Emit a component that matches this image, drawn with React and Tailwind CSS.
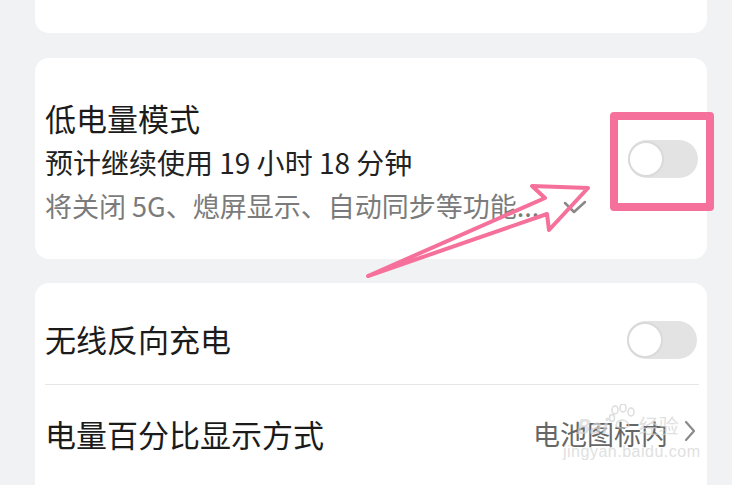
const font = { fontFamily: '"Noto Sans CJK SC", "Noto Sans", sans-serif' };

const Toggle = () => (
  <div className="relative w-[70px] h-[38px] rounded-full bg-[#e3e3e3] shrink-0">
    <div className="absolute left-0 top-[1px] w-[36px] h-[36px] rounded-full bg-white border-2 border-[#dadada]" />
  </div>
);

export default function App() {
  return (
    <div
      className="relative w-[732px] h-[485px] overflow-hidden bg-[#f1f2f4] pl-[35px] pr-[25px]"
      style={font}
    >
      {/* top card (cut off) */}
      <div className="h-[33px] bg-white rounded-b-[14px]" />

      {/* low power mode */}
      <div className="mt-[25px] h-[201px] bg-white rounded-[14px] px-[10px] flex justify-between">
        <div className="pt-[38px]">
          <div className="text-[31px] leading-[44px] text-[#1b1b1b]">低电量模式</div>
          <div className="text-[28px] leading-[44px] text-[#222]">预计继续使用 19 小时 18 分钟</div>
          <div className="flex items-center text-[27px] leading-[44px] text-[#7b7b7b]">
            <span>将关闭 5G、熄屏显示、自动同步等功能...</span>
            <svg width="24" height="14" viewBox="0 0 24 14" className="ml-[24px] mt-[2px]">
              <polyline points="2,3 11,12 22,2" fill="none" stroke="#888" strokeWidth="2.5" strokeLinecap="round" strokeLinejoin="round" />
            </svg>
          </div>
        </div>
        <div className="self-center mr-[-1px]">
          <Toggle />
        </div>
      </div>

      {/* wireless / percentage */}
      <div className="mt-[24px] h-[300px] bg-white rounded-t-[14px] px-[10px] pt-[12px]">
        <div className="h-[89px] flex items-center justify-between">
          <span className="text-[31px] text-[#1b1b1b]">无线反向充电</span>
          <Toggle />
        </div>
        <div className="h-px bg-[#e6e6e6] mr-[-2px]" />
        <div className="h-[98px] flex items-center justify-between">
          <span className="text-[31px] text-[#1b1b1b]">电量百分比显示方式</span>
          <div className="flex items-center">
            <span className="text-[27px] text-[#666]">电池图标内</span>
            <svg width="14" height="22" viewBox="0 0 14 22" className="ml-[15px] mb-[6px]">
              <polyline points="3,2 11,11 3,20" fill="none" stroke="#8a8a8a" strokeWidth="2.2" strokeLinecap="round" strokeLinejoin="round" />
            </svg>
          </div>
        </div>
      </div>

      {/* annotation: pink box around toggle */}
      <div className="absolute left-[610px] top-[112px] w-[104px] h-[99px] border-[8px] border-[#f5709a] rounded-[4px]" />

      {/* annotation: arrow */}
      <svg className="absolute inset-0 pointer-events-none" width="732" height="485" viewBox="0 0 732 485">
        <path
          d="M368 276 L545 198 L532 186 L588 188 L549 230 L547 214 Z"
          fill="none"
          stroke="#f5709a"
          strokeWidth="4"
          strokeLinejoin="round"
        />
      </svg>

      {/* watermark */}
      <div className="absolute left-[575px] top-[404px] pointer-events-none text-[#d4d4d4] opacity-70">
        <div className="flex items-end">
          <span className="text-[20px] font-bold leading-none italic">Bai</span>
          <svg width="30" height="26" viewBox="0 0 30 26" className="mb-[6px]">
            <g fill="none" stroke="#cfcfcf" strokeWidth="1.5">
              <ellipse cx="8" cy="6" rx="3" ry="4" />
              <ellipse cx="16" cy="4" rx="3" ry="4" />
              <ellipse cx="24" cy="8" rx="3" ry="4" />
              <ellipse cx="5" cy="14" rx="2.5" ry="3.5" />
              <path d="M9 22 C10 14 20 14 22 22 C18 25 12 25 9 22 Z" />
            </g>
          </svg>
          <span className="text-[20px] leading-none ml-[2px]">经验</span>
        </div>
        <div className="text-[16px] leading-none mt-[8px] ml-[-12px] tracking-[0.5px]" style={{ fontFamily: '"Liberation Sans", sans-serif' }}>
          jingyan.baidu.com
        </div>
      </div>
    </div>
  );
}
